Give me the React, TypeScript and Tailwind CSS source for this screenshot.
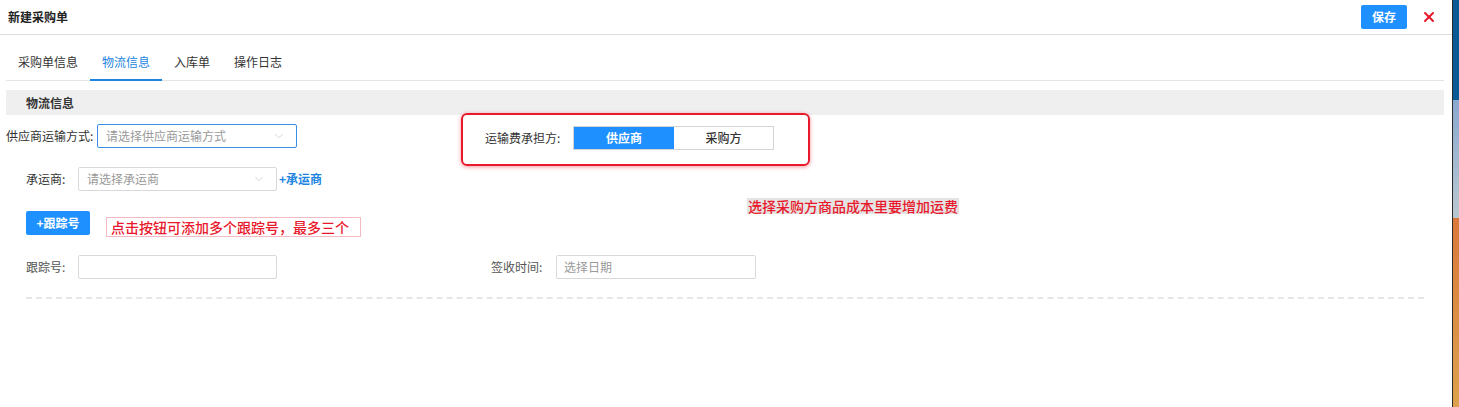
import { ChevronDown, X } from 'lucide-react';

const font = { fontFamily: '"Noto Sans CJK SC", "Noto Sans", sans-serif' };

function Select({ placeholder, focused, width }: { placeholder: string; focused?: boolean; width: string }) {
    return (
        <div
            className={`${width} h-[24px] flex items-center justify-between px-2 bg-white border rounded-[2px] ${focused ? 'border-[#3a8ee6]' : 'border-[#d9d9d9]'}`}
        >
            <span className="text-[12px] text-[#9a9a9a]">{placeholder}</span>
            <ChevronDown size={14} strokeWidth={1} className="text-[#bbbbbb] mr-[2px]" />
        </div>
    );
}

export default function App() {
    const tabs = ['采购单信息', '物流信息', '入库单', '操作日志'];

    return (
        <div className="w-[1459px] h-[407px] flex bg-white overflow-hidden" style={font}>
            {/* Main panel */}
            <div className="flex-1 flex flex-col">
                {/* Header */}
                <div className="h-[35px] flex items-center justify-between border-b border-[#dddddd] pl-[8px] pr-[15px]">
                    <span className="text-[12px] font-bold text-[#222]">新建采购单</span>
                    <div className="flex items-center gap-[14px]">
                        <button className="w-[46px] h-[24px] rounded-[2px] bg-[#1e90ff] text-white text-[12px] font-bold">保存</button>
                        <X size={16} strokeWidth={3} className="text-[#e8192c]" />
                    </div>
                </div>

                <div className="px-[6px] pr-[8px]">
                    {/* Tabs */}
                    <div className="flex h-[46px] items-end border-b border-[#e4e4e4]">
                        {tabs.map((t, i) => (
                            <div
                                key={t}
                                className={`h-[37px] flex items-center px-[12px] text-[12px] border-b-2 -mb-[1px] ${i === 1 ? 'text-[#1e86e0] border-[#1e86e0]' : 'text-[#333] border-transparent'}`}
                            >
                                {t}
                            </div>
                        ))}
                    </div>

                    {/* Section title */}
                    <div className="mt-[9px] h-[25px] bg-[#efefef] flex items-center pl-[20px]">
                        <span className="text-[12px] font-bold text-[#333]">物流信息</span>
                    </div>

                    {/* Row 1 */}
                    <div className="flex items-start">
                        <div className="flex items-center mt-[9px] w-[455px]">
                            <span className="text-[12px] text-[#333] w-[91px]">供应商运输方式:</span>
                            <Select placeholder="请选择供应商运输方式" focused width="w-[200px]" />
                        </div>
                        <div className="-mt-[2px] w-[349px] h-[53px] border-2 border-[#e8192c] rounded-[6px] shadow-[0_1px_4px_rgba(232,25,44,0.45)] flex items-center pl-[22px] pb-[4px]">
                            <span className="text-[12px] text-[#333] w-[88px]">运输费承担方:</span>
                            <div className="flex h-[24px] border border-[#d4d4d4]">
                                <div className="w-[100px] bg-[#1e90ff] text-white text-[12px] font-bold flex items-center justify-center">供应商</div>
                                <div className="w-[99px] bg-white text-[#333] text-[12px] font-medium flex items-center justify-center">采购方</div>
                            </div>
                        </div>
                    </div>

                    {/* Row 2 */}
                    <div className="flex items-center pl-[20px] mt-[1px]">
                        <span className="text-[12px] text-[#333] w-[52px]">承运商:</span>
                        <Select placeholder="请选择承运商" width="w-[199px]" />
                        <span className="ml-[2px] text-[12px] font-bold text-[#1e86e0]">+承运商</span>
                    </div>

                    {/* Row 3 */}
                    <div className="flex items-start pl-[20px]">
                        <button className="mt-[20px] w-[64px] h-[24px] rounded-[2px] bg-[#1e90ff] text-white text-[12px] font-bold">+跟踪号</button>
                        <div className="mt-[26px] ml-[16px] w-[255px] h-[20px] border border-[#f4b9c2] flex items-center pl-[4px]">
                            <span className="text-[14px] font-medium text-[#e8192c] leading-none">点击按钮可添加多个跟踪号，最多三个</span>
                        </div>
                        <div className="mt-[7px] ml-[386px] bg-[#e4e4e4] h-[16px] flex items-center px-[1px]">
                            <span className="text-[14px] font-medium text-[#e8192c] leading-none">选择采购方商品成本里要增加运费</span>
                        </div>
                    </div>

                    {/* Row 4 */}
                    <div className="flex items-center pl-[20px] mt-[18px]">
                        <span className="text-[12px] text-[#555] w-[52px]">跟踪号:</span>
                        <div className="w-[199px] h-[24px] border border-[#d9d9d9] rounded-[2px]" />
                        <span className="ml-[214px] text-[12px] text-[#555] w-[65px]">签收时间:</span>
                        <div className="w-[200px] h-[24px] border border-[#d9d9d9] rounded-[2px] flex items-center px-[7px]">
                            <span className="text-[12px] text-[#9a9a9a]">选择日期</span>
                        </div>
                    </div>

                    {/* Dashed divider */}
                    <div className="ml-[20px] mr-[20px] mt-[18px] border-t-2 border-dashed border-[#e6e6e6]" />
                </div>
            </div>

            {/* Desktop wallpaper strip */}
            <div className="w-[7px] flex flex-col border-l border-[#2a2a2a]">
                <div className="h-[100px] bg-[#0a5a93]" />
                <div className="h-[118px] bg-gradient-to-b from-[#8aa9cf] to-[#b9c8cf]" />
                <div className="flex-1 bg-gradient-to-b from-[#d9783a] to-[#dca24d]" />
            </div>
        </div>
    );
}
